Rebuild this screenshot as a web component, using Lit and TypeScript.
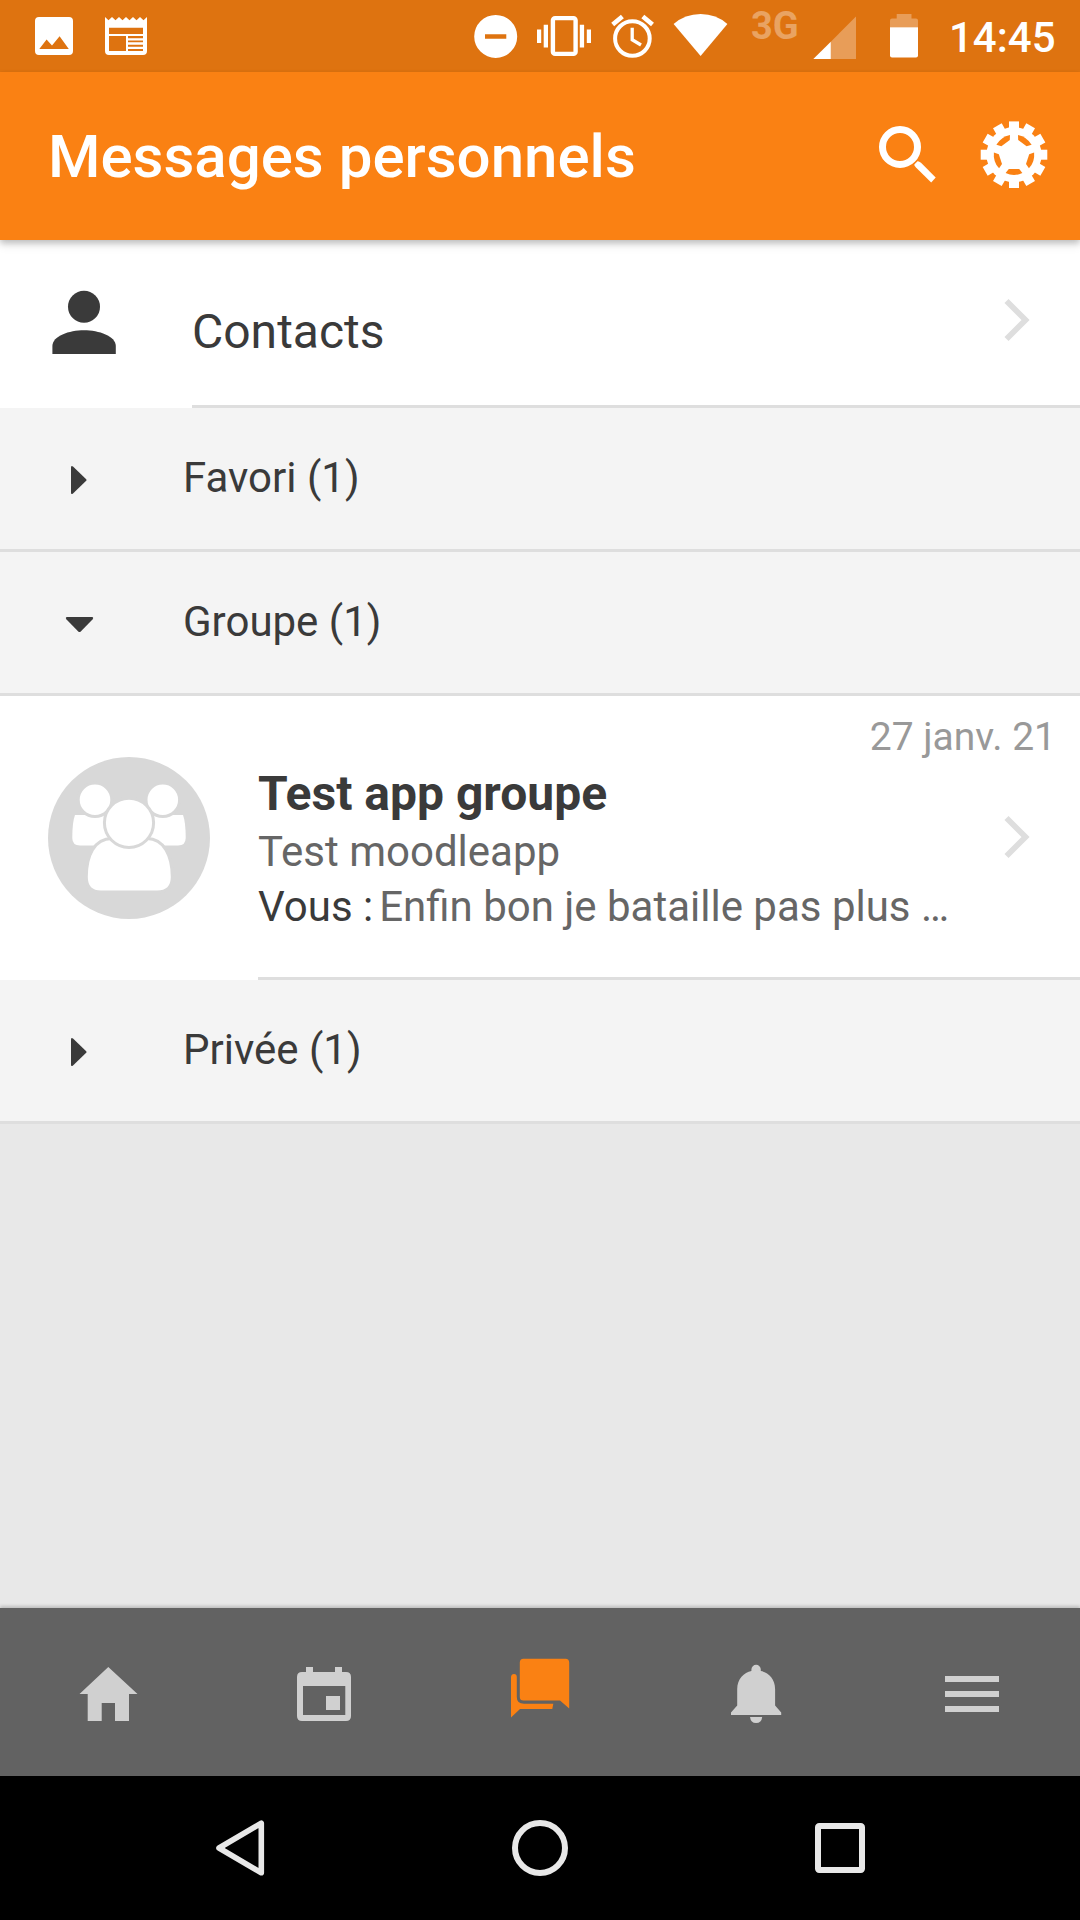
import { LitElement, html, svg, css, nothing, type SVGTemplateResult } from "lit";
import { customElement, property } from "lit/decorators.js";

/* Builds an svg whose user units are screen pixels, cut to the given box. */
const icon = (x: number, y: number, w: number, h: number, body: SVGTemplateResult) =>
  html`<svg class="icon" width=${w} height=${h} viewBox="${x} ${y} ${w} ${h}" fill="currentColor" aria-hidden="true">${body}</svg>`;

const pictureIcon = icon(33, 0, 42, 72, svg`
  <path fill-rule="evenodd" d="M39 17H69Q73 17 73 21V51Q73 55 69 55H39Q35 55 35 51V21Q35 17 39 17ZM39.3 49H68.8L59.6 36.2L52 45.6L46.6 39.6Z"/>`);

const newsIcon = icon(103, 0, 46, 72, svg`
  <path fill-rule="evenodd" d="M105 17L108.5 20.3L112 17L115.5 20.3L119 17L122.5 20.3L126 17L129.5 20.3L133 17L136.5 20.3L140 17L143.5 20.3L147 17V51Q147 55 143 55H109Q105 55 105 51Z
    M109 27.7V34H143V27.7ZM109 36V51H126V36ZM128 36V38.2H143V36ZM128 40.4V42.3H143V40.4ZM128 44.8V46.7H143V44.8ZM128 49V51H143V49Z"/>`);

const dndIcon = icon(474, 0, 44, 72, svg`
  <path fill-rule="evenodd" d="M474.2 36.4a21.5 21.5 0 1 0 43 0a21.5 21.5 0 1 0 -43 0ZM485 34.2H506.3V38.7H485Z"/>`);

const vibrateIcon = icon(537, 0, 54, 72, svg`
  <path d="M537 29.5h4.2v13.5h-4.2ZM543.7 24.8h4.3v22.7h-4.3ZM579.8 24.8h4.3v22.7h-4.3ZM586.8 29.5h4.2v13.5h-4.2Z"/>
  <rect x="552.9" y="18.1" width="22.7" height="35.8" rx="2.2" fill="none" stroke="currentColor" stroke-width="4.4"/>`);

const alarmIcon = icon(610, 0, 45, 72, svg`
  <g fill="none" stroke="currentColor" stroke-width="4">
    <circle cx="632.4" cy="38.5" r="17.3"/>
    <path stroke-width="3.3" d="M632.2 27.8V39.7L641 45"/>
    <path stroke-width="4.6" d="M612.7 24.6L622.4 16.5M642.8 16.5L652.5 24.6"/>
  </g>`);

const wifiIcon = icon(673, 0, 55, 72, svg`
  <path d="M700.6 56L673.6 24Q685 14 700.6 14T727.4 24Z"/>`);

const signalIcon = icon(812, 0, 46, 72, svg`
  <path opacity=".3" d="M830.8 59V41.7L856 16.5V59Z"/><path d="M813.3 59L830.8 41.7V59Z"/>`);

const batteryIcon = icon(889, 0, 30, 72, svg`
  <path opacity=".3" d="M896.7 14H911.5V18.5H916Q918 18.5 918 20.5V27.2H890V20.5Q890 18.5 892 18.5H896.7Z"/>
  <path d="M890 27.2H918V55.5Q918 57.5 916 57.5H892Q890 57.5 890 55.5Z"/>`);

const searchIcon = icon(878, 72, 60, 168, svg`
  <circle cx="900" cy="147" r="17.5" fill="none" stroke="currentColor" stroke-width="7"/>
  <path d="M914.3 164.5L917.5 161.3Q919 161 921 162.8L935.7 177.6L931.2 182.6L916 167.5Q914 165.5 914.3 164.5Z"/>`);

const teeth = Array.from({ length: 12 }, (_, i) => i * 30);
const slots = Array.from({ length: 5 }, (_, i) => i * 72);
const gearIcon = icon(978, 72, 72, 168, svg`
  <g transform="translate(1014 154.7)">
    <circle r="27.6"/>
    ${teeth.map((a) => svg`<path transform="rotate(${a})" d="M-5 -33.3H5V-24H-5Z"/>`)}
    ${slots.map((a) => svg`<path class="slot" transform="rotate(${a})" d="M-8.4 18.4A20.4 20.4 0 0 0 8.4 18.4L5.2 14.3H-5.2Z"/>`)}
  </g>`);

const personIcon = icon(48, 240, 72, 165, svg`
  <circle cx="84" cy="306.8" r="16"/>
  <path d="M52.4 354V346C52.4 336 69 330.2 84 330.2S115.8 336 115.8 346V354Z"/>`);

const chevron = icon(1000, 0, 34, 48, svg`
  <path d="M1006.5 5L1025.5 24L1006.5 43" fill="none" stroke="currentColor" stroke-width="5.8"/>`);

const caretRight = icon(60, 0, 40, 40, svg`
  <path d="M71 7.5Q71 5 73 6.6L86.2 19.2Q87 20 86.2 20.8L73 33.4Q71 35 71 32.5Z"/>`);
const caretDown = icon(60, 0, 40, 40, svg`
  <path d="M67 13Q65 13 66.5 15.5L78.5 27.7Q79.5 28.5 80.5 27.7L92.5 15.5Q94 13 92 13Z"/>`);

const groupAvatar = icon(48, 757, 162, 162, svg`
  <circle cx="129" cy="838" r="81" fill="#d8d8d8"/>
  <g fill="#fff" stroke="#d8d8d8" stroke-width="3">
    <path stroke="none" d="M75 815H115V845.5H80Q72.3 845.5 72.3 838Q72.3 822 75 815Z"/>
    <path stroke="none" d="M183 815H143V845.5H178Q185.7 845.5 185.7 838Q185.7 822 183 815Z"/>
    <circle cx="95" cy="799.8" r="16.8"/>
    <circle cx="162.8" cy="799.8" r="16.8"/>
    <path d="M112 838.5C94 838.5 86.3 856 86.3 877Q86.3 892 101 892H157Q172.3 892 172.3 877C172.3 856 164 838.5 147 838.5Z"/>
    <circle cx="129" cy="822.8" r="24.6"/>
  </g>`);

const homeIcon = icon(0, 1608, 216, 168, svg`
  <path d="M108.3 1667L137.5 1694H129V1721H115V1703H101.7V1721H87.7V1694H79.5Z"/>`);
const calendarIcon = icon(216, 1608, 216, 168, svg`
  <path fill-rule="evenodd" d="M306 1667H313V1672H335V1667H342V1672H346Q351 1672 351 1677V1716Q351 1721 346 1721H302Q297 1721 297 1716V1677Q297 1672 302 1672H306ZM303 1686V1715H345.3V1686ZM326 1696H340V1710H326Z"/>`);
const chatIcon = icon(432, 1608, 216, 168, svg`
  <path d="M523.5 1658.7H565.5Q569.2 1658.7 569.2 1662.5V1708.6L560 1700.5H523.5Q519.8 1700.5 519.8 1697V1662.5Q519.8 1658.7 523.5 1658.7Z"/>
  <path d="M511 1717.5V1677Q511.3 1674 514 1674Q516.8 1674 516.8 1677V1697Q516.8 1703.8 524 1703.8H553.3L552.3 1709H520Z"/>`);
const bellIcon = icon(648, 1608, 216, 168, svg`
  <path d="M731 1715V1712.5L737.2 1705.5V1689C737.2 1679 744 1672.3 751.4 1671V1669.5A4.7 4.7 0 0 1 760.8 1669.5V1671C768.5 1672.3 775.1 1679 775.1 1689V1705.5L781.2 1712.5V1715ZM750 1717H762.2Q761.5 1723 756.1 1723T750 1717Z"/>`);
const menuIcon = icon(864, 1608, 216, 168, svg`
  <path d="M945 1676H999V1682H945ZM945 1691H999V1697H945ZM945 1706H999V1712H945Z"/>`);

const backIcon = icon(90, 1776, 300, 144, svg`
  <path d="M261.3 1823.2V1872.8L219 1848Z" fill="none" stroke="currentColor" stroke-width="5.6" stroke-linejoin="round"/>`);
const circleIcon = icon(390, 1776, 300, 144, svg`
  <circle cx="540" cy="1848" r="25" fill="none" stroke="currentColor" stroke-width="6"/>`);
const squareIcon = icon(690, 1776, 300, 144, svg`
  <rect x="818" y="1826" width="44" height="44" rx="1.2" fill="none" stroke="currentColor" stroke-width="6"/>`);

const base = css`
  :host { display: block; font-family: Roboto, "Liberation Sans", sans-serif; color: #3a3a3a; }
  .icon { display: block; flex: none; }
`;

@customElement("status-bar")
export class StatusBar extends LitElement {
  static styles = [base, css`
    .bar { display: flex; align-items: flex-start; height: 72px; padding: 0 25px 0 33px; background: #de7310; color: #fff; overflow: hidden; }
    .news { margin-left: 28px; }
    .right { display: flex; margin-left: auto; }
    .vibrate { margin-left: 19px; }
    .alarm { margin-left: 19px; }
    .wifi { margin-left: 18px; }
    .net { width: 61px; margin-left: 23px; font: 700 38px/53px Roboto, sans-serif; color: rgba(255, 255, 255, 0.34); white-space: nowrap; }
    .battery { margin-left: 31px; }
    .clock { width: 106px; margin-left: 30px; font: 500 42px/76px Roboto, sans-serif; white-space: nowrap; }
  `];
  render() {
    return html`<div class="bar">
      ${pictureIcon}<span class="news">${newsIcon}</span>
      <div class="right">
        ${dndIcon}<span class="vibrate">${vibrateIcon}</span><span class="alarm">${alarmIcon}</span><span class="wifi">${wifiIcon}</span>
        <span class="net">3G</span>${signalIcon}<span class="battery">${batteryIcon}</span>
        <span class="clock">14:45</span>
      </div>
    </div>`;
  }
}

@customElement("title-bar")
export class TitleBar extends LitElement {
  static styles = [base, css`
    :host { position: relative; z-index: 1; }
    .bar { display: flex; align-items: center; height: 168px; padding: 0 30px 0 48px; background: #fa8113; color: #fff; box-shadow: 0 3px 6px rgba(0, 0, 0, 0.2), 0 6px 9px rgba(0, 0, 0, 0.08); }
    .title { flex: 1; margin: 0; padding-top: 2px; font-size: 60px; font-weight: 500; line-height: 80px; white-space: nowrap; }
    .gear { margin-left: 40px; }
    .slot { fill: #fa8113; }
  `];
  render() {
    return html`<header class="bar">
      <h1 class="title">Messages personnels</h1>
      ${searchIcon}<span class="gear">${gearIcon}</span>
    </header>`;
  }
}

@customElement("group-row")
export class GroupRow extends LitElement {
  @property() label = "";
  @property({ type: Boolean }) open = false;
  static styles = [base, css`
    .row { display: flex; align-items: center; box-sizing: border-box; height: 144px; padding-left: 60px; background: #f4f4f4; border-bottom: 3px solid #dedede; }
    .caret { padding-top: 3px; }
    .label { margin-left: 83px; font-size: 42px; line-height: 56px; padding-bottom: 2px; white-space: nowrap; }
  `];
  render() {
    return html`<div class="row">
      <span class="caret">${this.open ? caretDown : caretRight}</span>
      <span class="label">${this.label}</span>
    </div>`;
  }
}

@customElement("contacts-row")
export class ContactsRow extends LitElement {
  static styles = [base, css`
    .row { display: flex; height: 168px; padding-left: 48px; background: #fff; }
    .main { display: flex; flex: 1; box-sizing: border-box; margin-left: 72px; border-bottom: 3px solid #dedede; }
    .label { flex: 1; padding-top: 60px; font-size: 48px; line-height: 64px; white-space: nowrap; }
    .go { padding: 56px 46px 0 0; color: #dedede; }
  `];
  render() {
    return html`<div class="row">${personIcon}
      <div class="main"><span class="label">Contacts</span><span class="go">${chevron}</span></div>
    </div>`;
  }
}

@customElement("conversation-row")
export class ConversationRow extends LitElement {
  @property() heading = "";
  @property() subject = "";
  @property() sender = "";
  @property() message = "";
  @property() date = "";
  static styles = [base, css`
    .row { display: flex; box-sizing: border-box; height: 284px; padding-left: 48px; background: #fff; }
    .avatar { padding-top: 61px; }
    .main { display: grid; grid-template-columns: 700px 1fr; flex: 1; box-sizing: border-box; margin-left: 48px; border-bottom: 3px solid #dedede; align-content: start; white-space: nowrap; }
    .date { grid-column: 1 / 3; justify-self: end; padding: 16px 24px 0 0; height: 50px; box-sizing: border-box; font-size: 39px; line-height: 50px; color: #999; }
    .text { padding-top: 16px; }
    .heading { height: 62px; font-size: 48px; font-weight: 700; line-height: 64px; }
    .line { font-size: 42px; line-height: 55px; color: #666; }
    .sender { margin-right: 6px; color: #3a3a3a; }
    .go { justify-self: end; padding: 67px 46px 0 0; color: #dedede; }
  `];
  render() {
    return html`<div class="row">
      <span class="avatar">${groupAvatar}</span>
      <div class="main">
        <span class="date">${this.date}</span>
        <div class="text">
          <div class="heading">${this.heading}</div>
          <div class="line">${this.subject}</div>
          <div class="line">${this.sender ? html`<span class="sender">${this.sender}</span>` : nothing}${this.message}</div>
        </div>
        <span class="go">${chevron}</span>
      </div>
    </div>`;
  }
}

@customElement("tab-bar")
export class TabBar extends LitElement {
  static styles = [base, css`
    .bar { display: grid; grid-template-columns: repeat(5, 216px); height: 168px; background: #626262; color: #d0d0d0; box-shadow: 0 -2px 3px rgba(0, 0, 0, 0.18); }
    .active { color: #fa8113; }
  `];
  render() {
    return html`<nav class="bar">
      <span>${homeIcon}</span><span>${calendarIcon}</span><span class="active">${chatIcon}</span><span>${bellIcon}</span><span>${menuIcon}</span>
    </nav>`;
  }
}

@customElement("system-nav")
export class SystemNav extends LitElement {
  static styles = [base, css`
    .bar { display: flex; justify-content: center; height: 144px; background: #000; color: #e8e8e8; }
  `];
  render() {
    return html`<div class="bar">${backIcon}${circleIcon}${squareIcon}</div>`;
  }
}

@customElement("app-root")
export class AppRoot extends LitElement {
  static styles = [base, css`
    .screen { display: flex; flex-direction: column; width: 1080px; height: 1920px; background: #e8e8e8; overflow: hidden; }
    .list { flex: 1; }
  `];
  render() {
    return html`<div class="screen">
      <status-bar></status-bar>
      <title-bar></title-bar>
      <main class="list">
        <contacts-row></contacts-row>
        <group-row label="Favori (1)"></group-row>
        <group-row label="Groupe (1)" open></group-row>
        <conversation-row
          heading="Test app groupe"
          subject="Test moodleapp"
          sender="Vous :"
          message="Enfin bon je bataille pas plus …"
          date="27 janv. 21"
        ></conversation-row>
        <group-row label="Privée (1)"></group-row>
      </main>
      <tab-bar></tab-bar>
      <system-nav></system-nav>
    </div>`;
  }
}
